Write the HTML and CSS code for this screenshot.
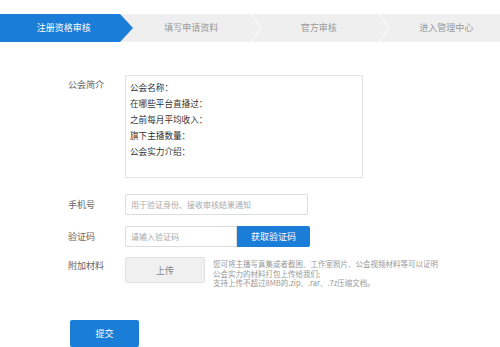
FILE: index.html
```html
<!DOCTYPE html>
<html lang="zh-CN">
<head>
    <meta charset="UTF-8">
    <title>公会入驻</title>
    <link rel="stylesheet" href="styles.css">
</head>
<body>
    <div class="steps">
        <div class="step active">
            注册资格审核
            <svg class="arrow" width="14" height="28" viewBox="0 0 14 28"><polygon points="0,0 13,14 0,28" fill="#1a7dd7"/></svg>
        </div>
        <div class="step">
            填写申请资料
            <svg class="chevron" width="12" height="28" viewBox="0 0 12 28"><polyline points="1,0 11,14 1,28" fill="none" stroke="#fafafa" stroke-width="1.2"/></svg>
        </div>
        <div class="step">
            官方审核
            <svg class="chevron" width="12" height="28" viewBox="0 0 12 28"><polyline points="1,0 11,14 1,28" fill="none" stroke="#fafafa" stroke-width="1.2"/></svg>
        </div>
        <div class="step">进入管理中心</div>
    </div>

    <form class="apply-form">
        <div class="row row-intro">
            <label class="label">公会简介</label>
            <textarea class="intro">公会名称：
在哪些平台直播过：
之前每月平均收入：
旗下主播数量：
公会实力介绍：</textarea>
        </div>

        <div class="row row-phone">
            <label class="label">手机号</label>
            <input class="input phone" type="text" placeholder="用于验证身份、接收审核结果通知">
        </div>

        <div class="row row-code">
            <label class="label">验证码</label>
            <div class="code-group">
                <input class="input code" type="text" placeholder="请输入验证码">
                <button type="button" class="code-btn">获取验证码</button>
            </div>
        </div>

        <div class="row row-files">
            <label class="label">附加材料</label>
            <div class="files">
                <button type="button" class="upload">上传</button>
                <p class="hint">您可将主播写真集或者截图、工作室照片、公会视频材料等可以证明<br>公会实力的材料打包上传给我们;<br>支持上传不超过8MB的.zip、.rar、.7z压缩文档。</p>
            </div>
        </div>

        <button type="button" class="submit">提交</button>
    </form>
</body>
</html>
```

FILE: styles.css
```css
body {
    margin: 0;
    background: #fff;
    font-family: "Noto Sans CJK SC", "Liberation Sans", sans-serif;
    color: #333;
}

.steps {
    display: flex;
    margin-top: 14px;
    height: 28px;
    background: #efefef;
    overflow: hidden;
}

.step {
    flex: 0 0 127.5px;
    position: relative;
    text-align: center;
    line-height: 28px;
    font-size: 9px;
    color: #999;
}

.step.active {
    background: linear-gradient(to right, #1a7dd7 120px, transparent 120px);
    color: #fff;
}

.step .arrow {
    position: absolute;
    top: 0;
    left: 120px;
}

.step .chevron {
    position: absolute;
    top: 0;
    right: -7px;
}

.apply-form {
    padding-left: 68px;
    margin-top: 33px;
}

.row {
    display: flex;
    align-items: flex-start;
}

.label {
    flex: 0 0 57px;
    font-size: 9px;
    color: #666;
}

.row-intro .label {
    line-height: 20px;
}

.intro {
    width: 238px;
    height: 103px;
    box-sizing: border-box;
    margin: 0;
    padding: 3px 4px;
    border: 1px solid #e3e3e3;
    font-family: inherit;
    font-size: 8.6px;
    line-height: 16px;
    color: #333;
    resize: none;
}

.row-phone {
    margin-top: 16px;
}

.row-phone .label,
.row-code .label {
    line-height: 21px;
}

.input {
    height: 21px;
    box-sizing: border-box;
    margin: 0;
    padding: 0 5px;
    border: 1px solid #ddd;
    border-radius: 2px;
    font-family: inherit;
    font-size: 8px;
    color: #333;
    outline: none;
}

.input::placeholder {
    color: #aaa;
}

.phone {
    width: 183px;
}

.row-code {
    margin-top: 11px;
}

.code-group {
    display: flex;
}

.code {
    width: 112px;
    border-radius: 2px 0 0 2px;
}

.code-btn {
    width: 73px;
    height: 21px;
    margin: 0;
    padding: 0;
    border: none;
    border-radius: 0 2px 2px 0;
    background: #1a7dd7;
    color: #fff;
    font-family: inherit;
    font-size: 9px;
}

.row-files {
    margin-top: 10px;
}

.row-files .label {
    line-height: 18px;
}

.files {
    display: flex;
    align-items: flex-start;
}

.upload {
    width: 80px;
    height: 26px;
    margin: 0;
    padding: 0;
    border: 1px solid #e2e2e2;
    border-radius: 2px;
    background: #f0f0f0;
    color: #888;
    font-family: inherit;
    font-size: 9px;
}

.hint {
    margin: 2px 0 0 8px;
    font-size: 7.5px;
    line-height: 9.5px;
    color: #999;
}

.submit {
    display: block;
    width: 69px;
    height: 27px;
    margin: 32px 0 0 2px;
    padding: 0;
    border: none;
    border-radius: 2px;
    background: #1a7dd7;
    color: #fff;
    font-family: inherit;
    font-size: 9px;
}
```
